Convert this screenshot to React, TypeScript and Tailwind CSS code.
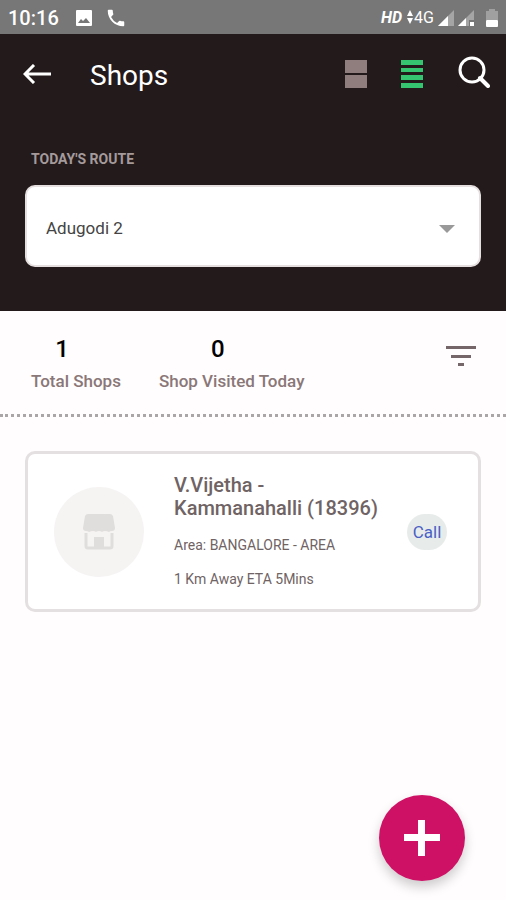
import React from 'react';

const stats = [
  { value: 1, label: 'Total Shops' },
  { value: 0, label: 'Shop Visited Today' }
];

const shops = [
  {
    name: 'V.Vijetha - Kammanahalli (18396)',
    area: 'Area: BANGALORE - AREA',
    distance: '1 Km Away ETA 5Mins'
  }
];

function StatusBar() {
  return (
    <div className="flex h-[34px] items-center bg-[#777777] px-2 pt-0.5 text-white">
      <span className="text-xl font-medium">10:16</span>
      <svg className="ml-4 h-[18px] w-[18px]" viewBox="0 0 18 18" aria-hidden="true">
        <rect x="1" y="1" width="16" height="16" rx="1" fill="#fff" />
        <path d="M3 14l3-4 2 2 3-3 4 5z" fill="#777777" />
      </svg>
      <svg className="ml-3 h-[22px] w-[22px]" viewBox="0 0 24 24" fill="currentColor" aria-hidden="true">
        <path d="M6.62 10.79a15.15 15.15 0 0 0 6.59 6.59l2.2-2.2a1 1 0 0 1 1.02-.24c1.12.37 2.33.57 3.57.57a1 1 0 0 1 1 1V20a1 1 0 0 1-1 1C10.61 21 3 13.39 3 4a1 1 0 0 1 1-1h3.5a1 1 0 0 1 1 1c0 1.25.2 2.45.57 3.57a1 1 0 0 1-.25 1.02z" />
      </svg>
      <div className="ml-auto flex items-center">
        <span className="text-base font-bold italic">HD</span>
        <svg className="ml-1 h-4 w-2" viewBox="0 0 8 16" fill="currentColor" aria-hidden="true">
          <path d="M4 0l3 6H1zM4 14l3-6H1z" />
        </svg>
        <span className="text-base">4G</span>
        <svg className="ml-1 h-4 w-4" viewBox="0 0 16 16" aria-hidden="true">
          <path d="M16 0v16H0z" fill="#a5a5a5" />
          <path d="M10 6v10H0z" fill="#fff" />
        </svg>
        <svg className="ml-1 h-4 w-4" viewBox="0 0 16 16" aria-hidden="true">
          <path d="M16 0v10h-5v6H0z" fill="#a5a5a5" />
          <path d="M8 8v8H0z" fill="#fff" />
          <rect x="12" y="12" width="4" height="4" fill="#fff" />
        </svg>
        <svg className="ml-3 h-5 w-3" viewBox="0 0 12 20" aria-hidden="true">
          <path d="M3 1h6v2h3v9H0V3h3z" fill="#a0a0a0" />
          <rect y="12" width="12" height="7" rx="1" fill="#fff" />
        </svg>
      </div>
    </div>
  );
}

export default function App() {
  return (
    <div className="min-h-screen bg-[#fffdfd] font-['Roboto',sans-serif]">
      <StatusBar />

      <header className="bg-[#231a1b] pb-11">
        <div className="flex h-[79px] items-center pl-[23px] pr-4">
          <button type="button" aria-label="Back" className="text-white">
            <svg className="h-5 w-7" viewBox="0 0 28 20" fill="none" stroke="currentColor" strokeWidth="3">
              <path d="M11 1L2 10l9 9M2 10h26" />
            </svg>
          </button>
          <h1 className="ml-[39px] pt-1 text-[28px] leading-8 text-white">Shops</h1>
          <div className="ml-auto flex items-center">
            <button type="button" aria-label="Card view">
              <svg className="h-7 w-[22px]" viewBox="0 0 22 28" fill="#907e7f">
                <path d="M0 0h22v13H0zM0 15h22v13H0z" />
              </svg>
            </button>
            <button type="button" aria-label="List view" className="ml-[34px]">
              <svg className="h-7 w-[22px]" viewBox="0 0 22 28" fill="#35c46f">
                <path d="M0 0h22v5H0zM0 8h22v4H0zM0 15h22v5H0zM0 23h22v5H0z" />
              </svg>
            </button>
            <button type="button" aria-label="Search" className="ml-[35px] pb-1 text-white">
              <svg className="h-8 w-8" viewBox="0 0 32 32" fill="none" stroke="currentColor" strokeWidth="3">
                <circle cx="14" cy="14" r="12" />
                <path d="M22 22l8 8" strokeWidth="4" strokeLinecap="round" />
              </svg>
            </button>
          </div>
        </div>

        <div className="px-[25px] pt-9">
          <label htmlFor="route" className="block pl-1.5 text-sm font-bold leading-5 text-[#a59a9b]">
            TODAY'S ROUTE
          </label>
          <div className="relative mt-4">
            <select
              id="route"
              defaultValue="Adugodi 2"
              className="h-[82px] w-full appearance-none rounded-[10px] border-2 border-[#e6dfdf] bg-white pl-[19px] pt-1.5 text-[17px] text-[#444444]"
            >
              <option>Adugodi 2</option>
            </select>
            <svg
              className="pointer-events-none absolute right-[26px] top-10 h-2 w-4"
              viewBox="0 0 16 8"
              fill="#999999"
              aria-hidden="true"
            >
              <path d="M0 0h16L8 8z" />
            </svg>
          </div>
        </div>
      </header>

      <main>
        <section className="flex items-start border-b-[3px] border-dotted border-[#aaa6a7] pb-[21px] pl-[31px] pr-7 pt-6">
          <dl className="flex gap-[38px]">
            {stats.map((stat) => (
              <div key={stat.label} className="flex flex-col-reverse">
                <dt className="mt-1.5 text-[17px] font-medium leading-6 text-[#8a7778]">{stat.label}</dt>
                <dd className="pr-7 text-center text-2xl font-medium leading-7 text-black">{stat.value}</dd>
              </div>
            ))}
          </dl>
          <button type="button" aria-label="Filter" className="ml-auto mt-[11px]">
            <svg className="h-6 w-[34px]" viewBox="0 0 34 24" fill="#75666a">
              <path d="M2 0h30v3H2zM7 9h20v3H7zM14 17h6v3h-6z" />
            </svg>
          </button>
        </section>

        <ul className="px-[25px] pt-[34px]">
          {shops.map((shop) => (
            <li
              key={shop.name}
              className="flex items-center rounded-[10px] border-[3px] border-[#e4e0e1] bg-white py-5 pl-[26px] pr-[31px]"
            >
              <div className="flex h-[90px] w-[90px] shrink-0 items-center justify-center rounded-full bg-[#f6f3f3]">
                <svg className="h-9 w-8" viewBox="0 0 32 36" aria-hidden="true">
                  <path
                    d="M5 0h22q2 0 3 2l2 12q0 3-3 3-2 0-3 1-2-1-4-1t-3 1q-1-1-3-1t-3 1q-1-1-3-1t-4 1q-1-1-3-1-3 0-3-3L2 2q1-2 3-2z"
                    fill="#e0dddd"
                  />
                  <path d="M3 19v13q0 2 2 2h22q2 0 2-2V19" fill="none" stroke="#e0dddd" strokeWidth="3" />
                  <path d="M11 33V23h10v10z" fill="#e0dddd" />
                </svg>
              </div>
              <div className="ml-[30px] min-w-0 flex-1 text-[#6f6364]">
                <h2 className="text-xl font-medium leading-[23px]">{shop.name}</h2>
                <p className="mt-[15px] text-sm leading-5">{shop.area}</p>
                <p className="mt-3.5 text-sm leading-5">{shop.distance}</p>
              </div>
              <button
                type="button"
                className="ml-5 h-9 w-10 shrink-0 rounded-full bg-[#e7eceb] pt-0.5 text-[17px] text-[#4a60c4]"
              >
                Call
              </button>
            </li>
          ))}
        </ul>
      </main>

      <button
        type="button"
        aria-label="Add shop"
        className="fixed bottom-[19px] right-[41px] flex h-[86px] w-[86px] items-center justify-center rounded-full bg-[#cf1166] shadow-[0_6px_12px_rgba(0,0,0,0.2)]"
      >
        <svg className="h-9 w-9" viewBox="0 0 36 36" fill="#fff">
          <path d="M14 0h7v14h15v7H21v15h-7V21H0v-7h14z" />
        </svg>
      </button>
    </div>
  );
}
